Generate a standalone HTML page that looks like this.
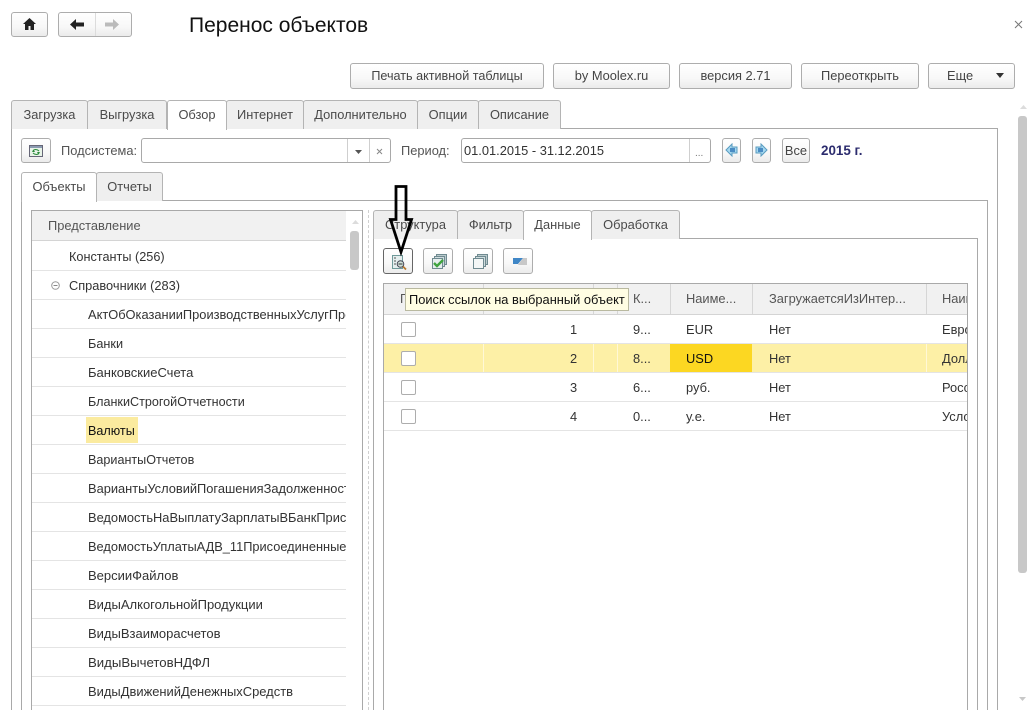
<!DOCTYPE html>
<html lang="ru"><head><meta charset="utf-8"><title>Перенос объектов</title>
<style>
html,body{margin:0;padding:0;background:#fff}
#p{position:relative;width:1029px;height:713px;overflow:hidden;background:#fff;font:12.85px/16px "Liberation Sans",Arial,sans-serif;color:#333}
#p div,#p svg{position:absolute;box-sizing:border-box}
.b{border:1px solid #adadad;border-radius:3px;background:linear-gradient(#fff,#f8f8f8 60%,#ebebeb);text-align:center;line-height:24px;color:#444;white-space:nowrap}
.t{border:1px solid #b4b4b4;border-bottom:0;border-radius:3px 3px 0 0;background:#efefef;text-align:center;line-height:27px;color:#4a4a4a;height:29px;white-space:nowrap}
.a{background:#fff;height:30px;z-index:3}
.l{background:#e4e4e4;height:1px}
.x{white-space:nowrap;line-height:16px}
.v{width:1px;background:#a9a9a9}
.c{width:15px;height:15px;border:1px solid #adadad;border-radius:2px;background:#fff}
.h{color:#555}
</style></head><body><div id="p">
<div class="b" style="left:11px;top:12px;width:37px;height:25px"></div>
<svg style="left:22px;top:17px" width="15" height="14" viewBox="0 0 15 14"><path d="M7.5 1 1 7h2v6h3.5V9h2v4H12V7h2z" fill="#222"/></svg>
<div class="b" style="left:58px;top:12px;width:74px;height:25px"></div>
<div style="left:95px;top:13px;width:1px;height:23px;background:#dcdcdc"></div>
<svg style="left:70px;top:19px" width="14" height="11" viewBox="0 0 14 11"><path d="M0 5.500 6 0v3.500h8v4H6V11z" fill="#222"/></svg>
<svg style="left:105px;top:19px" width="14" height="11" viewBox="0 0 14 11"><path d="M14 5.500 8 0v3.500H0v4h8V11z" fill="#bbb"/></svg>
<div class="x" style="left:189px;top:14px;font-size:21px;line-height:24px;color:#111">Перенос объектов</div>
<svg style="left:1014px;top:20px" width="9" height="9" viewBox="0 0 9 9"><path d="M1 1l7 7M8 1 1 8" stroke="#777" stroke-width="1"/></svg>

<div class="b" style="left:350px;top:63px;width:194px;height:26px;font-size:12.600px">Печать активной таблицы</div>
<div class="b" style="left:553px;top:63px;width:117px;height:26px">by Moolex.ru</div>
<div class="b" style="left:679px;top:63px;width:113px;height:26px">версия 2.71</div>
<div class="b" style="left:801px;top:63px;width:118px;height:26px">Переоткрыть</div>
<div class="b" style="left:928px;top:63px;width:87px;height:26px;text-align:left;padding-left:18px">Еще</div>
<svg style="left:996px;top:73px" width="8" height="5" viewBox="0 0 8 5"><path d="M0 0h8L4 5z" fill="#333"/></svg>

<div style="left:11px;top:128px;width:987px;height:582px;border:1px solid #a9a9a9;border-bottom:0"></div>
<div class="t" style="left:11px;top:100px;width:77px">Загрузка</div>
<div class="t" style="left:87px;top:100px;width:80px">Выгрузка</div>
<div class="t a" style="left:167px;top:100px;width:60px">Обзор</div>
<div class="t" style="left:226px;top:100px;width:78px">Интернет</div>
<div class="t" style="left:303px;top:100px;width:115px">Дополнительно</div>
<div class="t" style="left:417px;top:100px;width:62px">Опции</div>
<div class="t" style="left:478px;top:100px;width:83px">Описание</div>

<div class="b" style="left:21px;top:138px;width:30px;height:25px"></div>
<svg style="left:29px;top:144px" width="14" height="14" viewBox="0 0 14 14"><rect x=".5" y="1.500" width="13" height="11" fill="#e8f3e8" stroke="#667"/><rect x="1" y="2" width="12" height="2" fill="#8a9ab0"/><path d="M3 8h3L4.500 5.500zM11 8H8l1.500 2.500z" fill="#2a8a3a"/><path d="M4 7c1-2 4-2 6 0M10 9c-1 2-4 2-6 0" fill="none" stroke="#2a8a3a"/></svg>
<div class="x" style="left:61px;top:143px;color:#555">Подсистема:</div>
<div style="left:141px;top:138px;width:250px;height:25px;border:1px solid #a9a9a9;border-radius:3px;background:#fff"></div>
<div class="v" style="left:347px;top:139px;height:23px;background:#cfcfcf"></div>
<div class="v" style="left:369px;top:139px;height:23px;background:#cfcfcf"></div>
<svg style="left:355px;top:150px" width="7" height="4" viewBox="0 0 7 4"><path d="M0 0h7L3.500 4z" fill="#555"/></svg>
<svg style="left:376px;top:148px" width="7" height="7" viewBox="0 0 7 7"><path d="M1 1l5 5M6 1 1 6" stroke="#888"/></svg>
<div class="x" style="left:401px;top:143px;color:#555">Период:</div>
<div class="x" style="left:461px;top:138px;width:250px;height:25px;border:1px solid #a9a9a9;border-radius:3px;background:#fff;padding-left:2px;line-height:23px;color:#333">01.01.2015 - 31.12.2015</div>
<div class="v" style="left:689px;top:139px;height:23px;background:#cfcfcf"></div>
<div class="x" style="left:695px;top:146px;color:#777;font-size:10px">...</div>
<div class="b" style="left:722px;top:138px;width:19px;height:25px"></div>
<svg style="left:725px;top:143px" width="13" height="14" viewBox="0 0 13 14"><path d="M1 7 7 1v3h5v6H7v3z" fill="#a5d8f0" stroke="#5a9cc0"/><rect x="5" y="5" width="5" height="4" fill="#4a8cc4"/></svg>
<div class="b" style="left:752px;top:138px;width:19px;height:25px"></div>
<svg style="left:755px;top:143px" width="13" height="14" viewBox="0 0 13 14"><path d="M12 7 6 1v3H1v6h5v3z" fill="#a5d8f0" stroke="#5a9cc0"/><rect x="3" y="5" width="5" height="4" fill="#4a8cc4"/></svg>
<div class="b" style="left:782px;top:138px;width:28px;height:25px">Все</div>
<div class="x" style="left:821px;top:143px;font-weight:bold;color:#2c2c6e;font-size:13.400px">2015 г.</div>

<div style="left:21px;top:200px;width:967px;height:510px;border:1px solid #a9a9a9;border-bottom:0"></div>
<div class="t a" style="left:21px;top:172px;width:76px">Объекты</div>
<div class="t" style="left:96px;top:172px;width:67px">Отчеты</div>

<div style="left:31px;top:210px;width:332px;height:500px;border:1px solid #a9a9a9;border-bottom:0"></div>
<div style="left:32px;top:211px;width:314px;height:30px;background:#f1f1f1;border-bottom:1px solid #d4d4d4"></div>
<div class="x h" style="left:48px;top:218px">Представление</div>
<svg style="left:352px;top:220px" width="7" height="4" viewBox="0 0 7 4"><path d="M0 4h7L3.500 0z" fill="#dcdcdc"/></svg>
<div style="left:350px;top:231px;width:9px;height:39px;background:#c8c8c8;border-radius:3px"></div>
<div class="l" style="left:32px;top:270px;width:314px"></div>
<div class="l" style="left:32px;top:299px;width:314px"></div>
<div class="l" style="left:32px;top:328px;width:314px"></div>
<div class="l" style="left:32px;top:357px;width:314px"></div>
<div class="l" style="left:32px;top:386px;width:314px"></div>
<div class="l" style="left:32px;top:415px;width:314px"></div>
<div class="l" style="left:32px;top:444px;width:314px"></div>
<div class="l" style="left:32px;top:473px;width:314px"></div>
<div class="l" style="left:32px;top:502px;width:314px"></div>
<div class="l" style="left:32px;top:531px;width:314px"></div>
<div class="l" style="left:32px;top:560px;width:314px"></div>
<div class="l" style="left:32px;top:589px;width:314px"></div>
<div class="l" style="left:32px;top:618px;width:314px"></div>
<div class="l" style="left:32px;top:647px;width:314px"></div>
<div class="l" style="left:32px;top:676px;width:314px"></div>
<div class="l" style="left:32px;top:705px;width:314px"></div>
<div style="left:86px;top:417px;width:52px;height:26px;background:#fbeb9f"></div>
<svg style="left:50px;top:280px" width="11" height="11" viewBox="0 0 11 11"><circle cx="5.500" cy="5.500" r="3.800" fill="none" stroke="#999"/><path d="M3.500 5.500h4" stroke="#888"/></svg>
<div class="x" style="left:69px;top:249px;font-size:12.700px">Константы (256)</div>
<div class="x" style="left:69px;top:278px;font-size:12.800px">Справочники (283)</div>
<div class="x" style="left:88px;top:307px;width:258px;overflow:hidden">АктОбОказанииПроизводственныхУслугПрочих</div>
<div class="x" style="left:88px;top:336px;font-size:12.700px">Банки</div>
<div class="x" style="left:88px;top:365px;font-size:13px">БанковскиеСчета</div>
<div class="x" style="left:88px;top:394px;font-size:12.600px">БланкиСтрогойОтчетности</div>
<div class="x" style="left:88px;top:423px;color:#111;font-size:12.600px">Валюты</div>
<div class="x" style="left:88px;top:452px;font-size:12.600px">ВариантыОтчетов</div>
<div class="x" style="left:88px;top:481px;width:258px;overflow:hidden">ВариантыУсловийПогашенияЗадолженности</div>
<div class="x" style="left:88px;top:510px;width:258px;overflow:hidden">ВедомостьНаВыплатуЗарплатыВБанкПрисоединенные</div>
<div class="x" style="left:88px;top:539px;width:258px;overflow:hidden;font-size:12.800px">ВедомостьУплатыАДВ_11Присоединенные</div>
<div class="x" style="left:88px;top:568px;font-size:13px">ВерсииФайлов</div>
<div class="x" style="left:88px;top:597px;font-size:13px">ВидыАлкогольнойПродукции</div>
<div class="x" style="left:88px;top:626px;font-size:13px">ВидыВзаиморасчетов</div>
<div class="x" style="left:88px;top:655px;font-size:13.200px">ВидыВычетовНДФЛ</div>
<div class="x" style="left:88px;top:684px;font-size:12.950px">ВидыДвиженийДенежныхСредств</div>

<div style="left:368px;top:210px;width:0;height:500px;border-left:1px dashed #d0d0d0"></div>

<div style="left:373px;top:238px;width:605px;height:472px;border:1px solid #a9a9a9;border-bottom:0"></div>
<div class="t" style="left:373px;top:210px;width:85px">Структура</div>
<div class="t" style="left:457px;top:210px;width:67px">Фильтр</div>
<div class="t a" style="left:523px;top:210px;width:69px">Данные</div>
<div class="t" style="left:591px;top:210px;width:89px">Обработка</div>

<div class="b" style="left:383px;top:248px;width:30px;height:26px;border-color:#666"></div>
<svg style="left:391px;top:254px" width="17" height="17" viewBox="0 0 17 17"><rect x="1.500" y="1.500" width="10" height="13" fill="#e4eeee" stroke="#6f9a9a"/><path d="M3 4h2M3 7h2M3 10h2" stroke="#555"/><circle cx="9.500" cy="10" r="3.300" fill="#cfe0d8" stroke="#445"/><path d="M7.500 10h4" stroke="#333"/><path d="M12 12.500l3 3" stroke="#b5772e" stroke-width="1.800"/></svg>
<div class="b" style="left:423px;top:248px;width:30px;height:26px"></div>
<svg style="left:431px;top:253px" width="17" height="17" viewBox="0 0 17 17"><rect x="5.500" y="1.500" width="10" height="10" fill="#b9c9cc" stroke="#6f8a90"/><rect x="3.500" y="3.500" width="10" height="10" fill="#cfdcdf" stroke="#6f8a90"/><rect x="1.500" y="5.500" width="10" height="10" fill="#e6eeee" stroke="#6f8a90"/><path d="M3 10l3 3 6-6" fill="none" stroke="#3fa33f" stroke-width="2.400"/></svg>
<div class="b" style="left:463px;top:248px;width:30px;height:26px"></div>
<svg style="left:472px;top:253px" width="17" height="17" viewBox="0 0 17 17"><rect x="5.500" y="1.500" width="10" height="10" fill="#b9c9cc" stroke="#6f8a90"/><rect x="3.500" y="3.500" width="10" height="10" fill="#cfdcdf" stroke="#6f8a90"/><rect x="1.500" y="5.500" width="10" height="10" fill="#f3f6f6" stroke="#6f8a90"/></svg>
<div class="b" style="left:503px;top:248px;width:30px;height:26px"></div>
<svg style="left:513px;top:258px" width="14" height="7" viewBox="0 0 14 7"><path d="M0 0h10L5 6H0z" fill="#3f86c6"/><path d="M10 0h4v7H5z" fill="#c8c8c8"/></svg>

<div style="left:383px;top:283px;width:585px;height:427px;border:1px solid #a9a9a9;border-bottom:0;border-right:1px solid #a9a9a9"></div>
<div style="left:384px;top:284px;width:583px;height:31px;background:#f1f1f1"></div>
<div style="left:384px;top:344px;width:583px;height:28px;background:#fdf0a6"></div>
<div style="left:670px;top:344px;width:82px;height:28px;background:#fcd722"></div>
<div class="v" style="left:483px;top:284px;height:31px;background:#d6d6d6"></div>
<div class="v" style="left:593px;top:284px;height:31px;background:#d6d6d6"></div>
<div class="v" style="left:617px;top:284px;height:31px;background:#d6d6d6"></div>
<div class="v" style="left:670px;top:284px;height:31px;background:#d6d6d6"></div>
<div class="v" style="left:752px;top:284px;height:31px;background:#d6d6d6"></div>
<div class="v" style="left:926px;top:284px;height:31px;background:#d6d6d6"></div>
<div class="v" style="left:483px;top:344px;height:28px;background:#fff8d6"></div>
<div class="v" style="left:593px;top:344px;height:28px;background:#fff8d6"></div>
<div class="v" style="left:617px;top:344px;height:28px;background:#fff8d6"></div>
<div class="v" style="left:926px;top:344px;height:28px;background:#fff8d6"></div>
<div class="l" style="left:384px;top:314px;width:583px;background:#d4d4d4"></div>
<div class="l" style="left:384px;top:343px;width:583px"></div>
<div class="l" style="left:384px;top:372px;width:583px"></div>
<div class="l" style="left:384px;top:401px;width:583px"></div>
<div class="l" style="left:384px;top:430px;width:583px"></div>
<div class="x h" style="left:400px;top:291px">П</div>
<div class="x h" style="left:633px;top:291px">К...</div>
<div class="x h" style="left:686px;top:291px">Наиме...</div>
<div class="x h" style="left:769px;top:291px">ЗагружаетсяИзИнтер...</div>
<div class="x h" style="left:942px;top:291px;width:25px;overflow:hidden">Наименование</div>
<div class="c" style="left:401px;top:322px"></div>
<div class="c" style="left:401px;top:351px"></div>
<div class="c" style="left:401px;top:380px"></div>
<div class="c" style="left:401px;top:409px"></div>
<div class="x" style="left:570px;top:322px">1</div>
<div class="x" style="left:570px;top:351px">2</div>
<div class="x" style="left:570px;top:380px">3</div>
<div class="x" style="left:570px;top:409px">4</div>
<div class="x" style="left:633px;top:322px">9...</div>
<div class="x" style="left:633px;top:351px">8...</div>
<div class="x" style="left:633px;top:380px">6...</div>
<div class="x" style="left:633px;top:409px">0...</div>
<div class="x" style="left:686px;top:322px">EUR</div>
<div class="x" style="left:686px;top:351px;color:#111">USD</div>
<div class="x" style="left:686px;top:380px">руб.</div>
<div class="x" style="left:686px;top:409px">у.е.</div>
<div class="x" style="left:769px;top:322px">Нет</div>
<div class="x" style="left:769px;top:351px">Нет</div>
<div class="x" style="left:769px;top:380px">Нет</div>
<div class="x" style="left:769px;top:409px">Нет</div>
<div class="x" style="left:942px;top:322px;width:25px;overflow:hidden">Евро</div>
<div class="x" style="left:942px;top:351px;width:25px;overflow:hidden">Доллар</div>
<div class="x" style="left:942px;top:380px;width:25px;overflow:hidden">Российский</div>
<div class="x" style="left:942px;top:409px;width:25px;overflow:hidden">Условная</div>

<div class="x" style="left:405px;top:288px;width:224px;height:23px;background:#fffde3;border:1px solid #b9b9a0;padding-left:3px;line-height:21px;color:#111;z-index:5">Поиск ссылок на выбранный объект</div>

<svg style="left:386px;top:183px;z-index:6" width="30" height="74" viewBox="0 0 30 74"><path d="M10 3.500h10v33h5.500L15 69 4.500 36.500H10z" fill="none" stroke="#000" stroke-width="2.800"/></svg>

<svg style="left:1020px;top:105px" width="7" height="4" viewBox="0 0 7 4"><path d="M0 4h7L3.500 0z" fill="#dcdcdc"/></svg>
<div style="left:1018px;top:116px;width:9px;height:457px;background:#c8c8c8;border-radius:3px"></div>
<svg style="left:1019px;top:697px" width="7" height="4" viewBox="0 0 7 4"><path d="M0 0h7L3.500 4z" fill="#c8c8c8"/></svg>
</div></body></html>
